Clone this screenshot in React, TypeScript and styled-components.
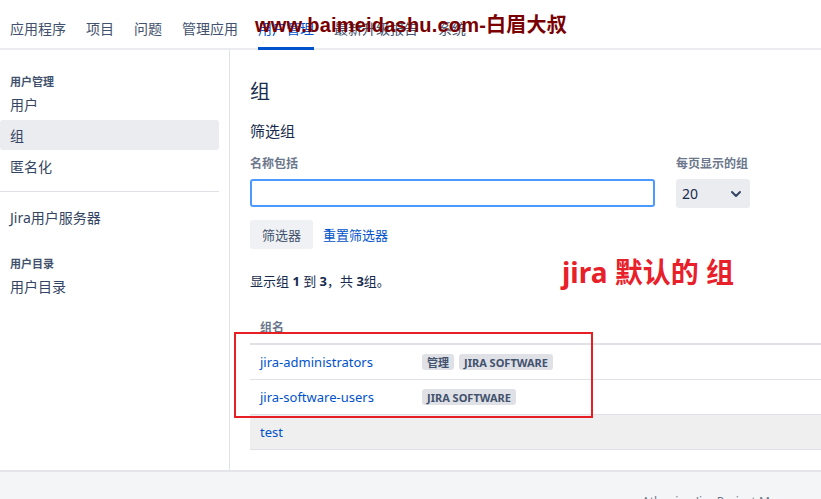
import React from 'react';
import styled, { createGlobalStyle } from 'styled-components';

const GlobalStyle = createGlobalStyle`
  html, body {
    margin: 0;
    padding: 0;
    background: #ffffff;
  }
  body {
    font-family: "Noto Sans", "Noto Sans CJK SC", sans-serif;
    color: #172b4d;
    overflow: hidden;
  }
`;

const Page = styled.div`
  position: relative;
  width: 821px;
  height: 499px;
  display: flex;
  flex-direction: column;
  overflow: hidden;
`;

const TopNav = styled.nav`
  flex-shrink: 0;
  height: 48px;
  display: flex;
  align-items: stretch;
  gap: 20px;
  padding: 0 10px;
  border-bottom: 2px solid #ebecf0;
`;

const NavTab = styled.a<{ $active?: boolean }>`
  display: flex;
  align-items: center;
  padding-top: 6px;
  font-size: 14px;
  color: ${(p) => (p.$active ? '#0052cc' : '#42526e')};
  box-shadow: ${(p) => (p.$active ? 'inset 0 -3px 0 #0052cc' : 'none')};
  margin-bottom: -2px;
  white-space: nowrap;
`;

const Watermark = styled.div`
  position: absolute;
  left: 255px;
  top: 9px;
  font-family: "Liberation Sans", "Noto Sans CJK SC", sans-serif;
  font-weight: bold;
  font-size: 20px;
  letter-spacing: 0.2px;
  color: #7a0000;
  white-space: nowrap;
`;

const Body = styled.div`
  flex-shrink: 0;
  display: flex;
  height: 420px;
`;

const Sidebar = styled.aside`
  width: 219px;
  padding: 25px 10px 0 0;
  border-right: 1px solid #dfe1e6;
  display: flex;
  flex-direction: column;
  gap: 1px;
`;

const SideHeader = styled.div<{ $top?: number }>`
  font-size: 11px;
  font-weight: bold;
  line-height: 13px;
  color: #42526e;
  padding-left: 10px;
  margin-top: ${(p) => p.$top ?? 0}px;
`;

const SideItem = styled.a<{ $active?: boolean; $top?: number }>`
  display: flex;
  align-items: center;
  height: 30px;
  padding-left: 10px;
  font-size: 14px;
  color: #344563;
  border-radius: 3px;
  background: ${(p) => (p.$active ? '#ebecf0' : 'transparent')};
  margin-top: ${(p) => p.$top ?? 0}px;
`;

const SideDivider = styled.hr`
  border: none;
  border-top: 1px solid #dfe1e6;
  margin: 9px 0 0;
`;

const Main = styled.main`
  position: relative;
  flex: 1;
  padding: 30px 0 0 20px;
  display: flex;
  flex-direction: column;
`;

const Title = styled.h1`
  margin: 0;
  font-size: 20px;
  line-height: 24px;
  font-weight: normal;
  color: #172b4d;
`;

const SubTitle = styled.h2`
  margin: 17px 0 0;
  font-size: 15px;
  line-height: 20px;
  font-weight: normal;
  color: #172b4d;
`;

const FormRow = styled.div`
  display: flex;
  gap: 21px;
  margin-top: 15px;
`;

const Field = styled.div<{ $width: number }>`
  display: flex;
  flex-direction: column;
  gap: 7px;
  width: ${(p) => p.$width}px;
`;

const Label = styled.label`
  font-size: 12px;
  line-height: 16px;
  font-weight: 600;
  color: #6b778c;
`;

const TextInput = styled.input`
  box-sizing: border-box;
  height: 28px;
  width: 100%;
  border: 2px solid #4c9aff;
  border-radius: 3px;
  outline: none;
  background: #fff;
`;

const SelectBox = styled.div`
  box-sizing: border-box;
  height: 29px;
  width: 100%;
  background: #ebecf0;
  border-radius: 3px;
  display: flex;
  align-items: center;
  justify-content: space-between;
  padding: 0 6px 0 6px;
  font-size: 14px;
  color: #172b4d;
`;

const ButtonRow = styled.div`
  display: flex;
  align-items: center;
  gap: 10px;
  margin-top: 12px;
`;

const Button = styled.button`
  height: 29px;
  padding: 0 12px;
  border: none;
  border-radius: 3px;
  background: #f0f1f4;
  font-family: inherit;
  font-size: 13px;
  color: #42526e;
`;

const LinkText = styled.a`
  font-size: 13px;
  color: #0052cc;
`;

const Summary = styled.p`
  margin: 22px 0 0;
  font-size: 13px;
  line-height: 20px;
  color: #172b4d;
  b {
    font-weight: bold;
  }
`;

const Annotation = styled.div`
  position: absolute;
  left: 332px;
  top: 201px;
  font-size: 28px;
  font-weight: bold;
  color: #e8202a;
  white-space: nowrap;
`;

const Table = styled.div`
  margin-top: 20px;
  display: flex;
  flex-direction: column;
`;

const HeadCell = styled.div`
  height: 32px;
  display: flex;
  align-items: center;
  padding-left: 10px;
  font-size: 12px;
  font-weight: 600;
  color: #6b778c;
  border-bottom: 2px solid #dfe1e6;
`;

const Row = styled.div<{ $shaded?: boolean }>`
  height: 34px;
  display: flex;
  align-items: center;
  padding-left: 10px;
  border-bottom: 1px solid #dfe1e6;
  background: ${(p) => (p.$shaded ? '#efefef' : 'transparent')};
`;

const GroupName = styled.a`
  width: 162px;
  font-size: 13px;
  color: #0052cc;
`;

const Badges = styled.div`
  display: flex;
  gap: 5px;
`;

const Badge = styled.span`
  display: inline-flex;
  align-items: center;
  height: 16px;
  padding: 0 5px;
  border-radius: 3px;
  background: #dfe1e6;
  color: #42526e;
  font-size: 11px;
  font-weight: bold;
`;

const Highlight = styled.div`
  position: absolute;
  left: 4px;
  top: 282px;
  width: 355px;
  height: 82px;
  border: 2px solid #e81e25;
`;

const Footer = styled.footer`
  flex: 1;
  background: #f4f5f7;
  border-top: 2px solid #e4e5ea;
  padding: 21px 0 0 642px;
  font-size: 12px;
  color: #6b778c;
  white-space: nowrap;
  overflow: hidden;
`;

const Chevron = () => (
  <svg width="16" height="16" viewBox="0 0 24 24" fill="none">
    <path d="M6 9l6 6 6-6" stroke="#344563" strokeWidth="3" strokeLinecap="round" strokeLinejoin="round" />
  </svg>
);

const tabs = ['应用程序', '项目', '问题', '管理应用', '用户管理', '最新升级报告', '系统'];

const groups = [
  { name: 'jira-administrators', badges: ['管理', 'JIRA SOFTWARE'] },
  { name: 'jira-software-users', badges: ['JIRA SOFTWARE'] },
  { name: 'test', badges: [], shaded: true },
];

export default function App() {
  return (
    <>
      <GlobalStyle />
      <Page>
        <TopNav>
          {tabs.map((t) => (
            <NavTab key={t} $active={t === '用户管理'}>
              {t}
            </NavTab>
          ))}
        </TopNav>
        <Watermark>www.baimeidashu.com-白眉大叔</Watermark>
        <Body>
          <Sidebar>
            <SideHeader>用户管理</SideHeader>
            <SideItem>用户</SideItem>
            <SideItem $active>组</SideItem>
            <SideItem>匿名化</SideItem>
            <SideDivider />
            <SideItem $top={9}>Jira用户服务器</SideItem>
            <SideHeader $top={24}>用户目录</SideHeader>
            <SideItem>用户目录</SideItem>
          </Sidebar>
          <Main>
            <Title>组</Title>
            <SubTitle>筛选组</SubTitle>
            <FormRow>
              <Field $width={405}>
                <Label>名称包括</Label>
                <TextInput />
              </Field>
              <Field $width={74}>
                <Label>每页显示的组</Label>
                <SelectBox>
                  <span>20</span>
                  <Chevron />
                </SelectBox>
              </Field>
            </FormRow>
            <ButtonRow>
              <Button>筛选器</Button>
              <LinkText>重置筛选器</LinkText>
            </ButtonRow>
            <Summary>
              显示组 <b>1</b> 到 <b>3</b>，共 <b>3</b>组。
            </Summary>
            <Annotation>jira 默认的 组</Annotation>
            <Table>
              <HeadCell>组名</HeadCell>
              {groups.map((g) => (
                <Row key={g.name} $shaded={g.shaded}>
                  <GroupName>{g.name}</GroupName>
                  <Badges>
                    {g.badges.map((b) => (
                      <Badge key={b}>{b}</Badge>
                    ))}
                  </Badges>
                </Row>
              ))}
            </Table>
            <Highlight />
          </Main>
        </Body>
        <Footer>Atlassian Jira Project Management Software</Footer>
      </Page>
    </>
  );
}
